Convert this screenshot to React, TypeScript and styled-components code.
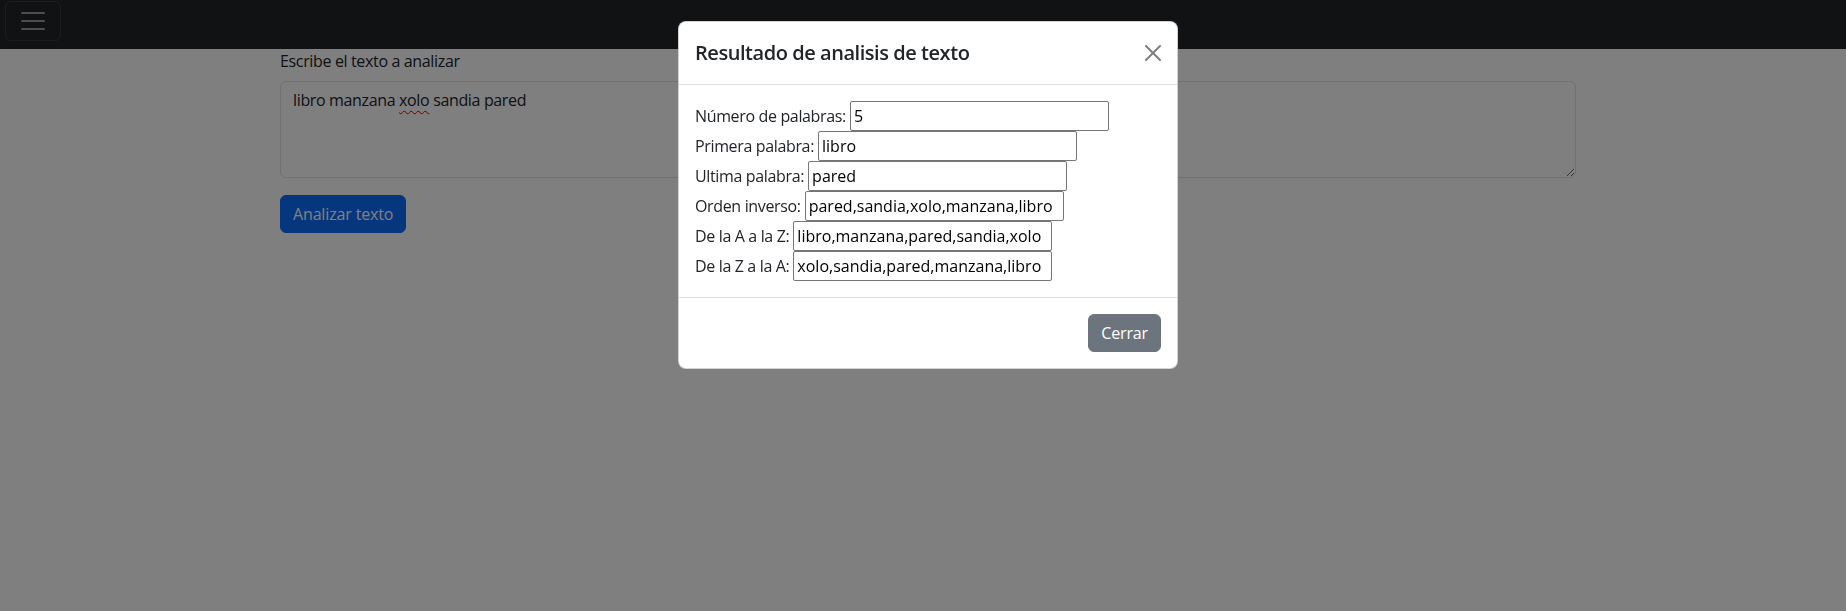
import React from "react";
import styled, { createGlobalStyle } from "styled-components";

const GlobalStyle = createGlobalStyle`
  *, *::before, *::after { box-sizing: border-box; }
  html, body { margin: 0; padding: 0; }
  body {
    font-family: "Open Sans", "Noto Sans", sans-serif;
    font-size: 16px;
    line-height: 1.5;
    letter-spacing: -0.35px;
    color: #212529;
    background: #fff;
    overflow: hidden;
  }
`;

const Navbar = styled.nav`
  height: 49px;
  background: #212529;
  display: flex;
  align-items: flex-start;
  padding: 1px 5px;
`;

const Toggler = styled.button`
  width: 56px;
  height: 40px;
  padding: 4px 12px;
  background: transparent;
  border: 1px solid rgba(255, 255, 255, 0.1);
  border-radius: 6px;
  display: flex;
  align-items: center;
  justify-content: center;
`;

const Main = styled.main`
  width: 1296px;
  margin-left: 280px;
  display: flex;
  flex-direction: column;
  align-items: flex-start;
`;

const FieldLabel = styled.label`
  display: block;
  margin-bottom: 8px;
`;

const TextArea = styled.div`
  width: 100%;
  height: 97px;
  padding: 6px 12px;
  border: 1px solid #dee2e6;
  border-radius: 6px;
  background: #fff;
  color: #212529;
  resize: vertical;
  overflow: auto;
`;

const Misspelled = styled.span`
  text-decoration: underline wavy #d00;
  text-decoration-thickness: 1px;
  text-underline-offset: 4px;
`;

const Button = styled.button<{ $variant: "primary" | "secondary" }>`
  font-family: inherit;
  font-size: 16px;
  line-height: 1.5;
  letter-spacing: -0.15px;
  padding: 6px 12px;
  border-radius: 6px;
  color: #fff;
  border: 1px solid ${(p) => (p.$variant === "primary" ? "#0d6efd" : "#6c757d")};
  background: ${(p) => (p.$variant === "primary" ? "#0d6efd" : "#6c757d")};
  cursor: pointer;
`;

const AnalyzeButton = styled(Button)`
  margin-top: 17px;
`;

const Backdrop = styled.div`
  position: fixed;
  inset: 0;
  background: rgba(0, 0, 0, 0.5);
`;

const ModalWrap = styled.div`
  position: fixed;
  inset: 0;
  display: flex;
  justify-content: center;
  align-items: flex-start;
  padding-top: 21px;
  padding-left: 10px;
`;

const ModalContent = styled.div`
  width: 500px;
  background: #fff;
  border: 1px solid rgba(0, 0, 0, 0.175);
  border-radius: 8px;
  display: flex;
  flex-direction: column;
`;

const ModalHeader = styled.div`
  display: flex;
  align-items: center;
  justify-content: space-between;
  padding: 16px;
  border-bottom: 1px solid #dee2e6;
`;

const ModalTitle = styled.h5`
  margin: 0;
  font-size: 20px;
  font-weight: 600;
  letter-spacing: -0.45px;
  line-height: 1.5;
`;

const CloseButton = styled.button`
  width: 16px;
  height: 16px;
  padding: 0;
  border: 0;
  background: transparent;
  opacity: 0.5;
  display: flex;
  cursor: pointer;
`;

const ModalBody = styled.div`
  padding: 16px;
  display: flex;
  flex-direction: column;
`;

const ResultRow = styled.div`
  display: flex;
  align-items: center;
  height: 30px;
  gap: 4px;
`;

const ResultInput = styled.input`
  width: 259px;
  height: 30px;
  font-family: inherit;
  font-size: 16px;
  letter-spacing: normal;
  line-height: normal;
  padding: 1px 3px;
  border: 1px solid #767676;
  border-radius: 2px;
  color: #000;
  background: #fff;
  margin: 0;
`;

const ModalFooter = styled.div`
  display: flex;
  justify-content: flex-end;
  padding: 12px;
  border-top: 1px solid #dee2e6;
`;

const CloseFooterButton = styled(Button)`
  margin: 4px;
`;

const results: [string, string][] = [
  ["Número de palabras:", "5"],
  ["Primera palabra:", "libro"],
  ["Ultima palabra:", "pared"],
  ["Orden inverso:", "pared,sandia,xolo,manzana,libro"],
  ["De la A a la Z:", "libro,manzana,pared,sandia,xolo"],
  ["De la Z a la A:", "xolo,sandia,pared,manzana,libro"],
];

export default function App() {
  return (
    <>
      <GlobalStyle />
      <Navbar>
        <Toggler aria-label="Toggle navigation">
          <svg width="30" height="30" viewBox="0 0 30 30">
            <path
              d="M4 7h22M4 15h22M4 23h22"
              stroke="rgba(255,255,255,0.55)"
              strokeWidth="2"
              strokeLinecap="round"
            />
          </svg>
        </Toggler>
      </Navbar>
      <Main>
        <FieldLabel>Escribe el texto a analizar</FieldLabel>
        <TextArea>
          libro manzana <Misspelled>xolo</Misspelled> sandia pared
        </TextArea>
        <AnalyzeButton $variant="primary">Analizar texto</AnalyzeButton>
      </Main>
      <Backdrop />
      <ModalWrap>
        <ModalContent>
          <ModalHeader>
            <ModalTitle>Resultado de analisis de texto</ModalTitle>
            <CloseButton aria-label="Close">
              <svg width="16" height="16" viewBox="0 0 16 16">
                <path
                  fill="#000"
                  d="M.293.293a1 1 0 0 1 1.414 0L8 6.586 14.293.293a1 1 0 1 1 1.414 1.414L9.414 8l6.293 6.293a1 1 0 0 1-1.414 1.414L8 9.414l-6.293 6.293a1 1 0 0 1-1.414-1.414L6.586 8 .293 1.707a1 1 0 0 1 0-1.414z"
                />
              </svg>
            </CloseButton>
          </ModalHeader>
          <ModalBody>
            {results.map(([label, value]) => (
              <ResultRow key={label}>
                <span>{label}</span>
                <ResultInput type="text" readOnly value={value} />
              </ResultRow>
            ))}
          </ModalBody>
          <ModalFooter>
            <CloseFooterButton $variant="secondary">Cerrar</CloseFooterButton>
          </ModalFooter>
        </ModalContent>
      </ModalWrap>
    </>
  );
}
